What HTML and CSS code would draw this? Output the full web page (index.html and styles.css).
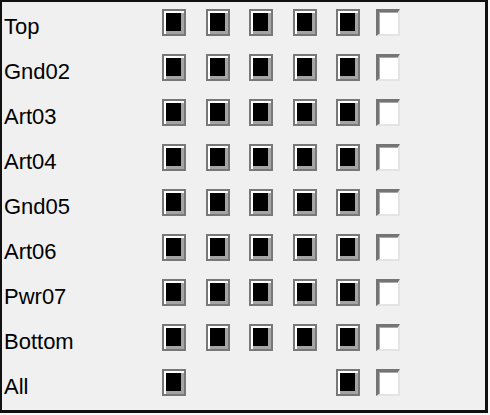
FILE: index.html
```html
<!DOCTYPE html>
<html>
<head>
<meta charset="utf-8">
<link rel="stylesheet" href="styles.css">
</head>
<body>
<div class="frame">
  <div class="grid">
    <div class="label">Top</div>
    <div class="cell"><span class="cb"></span></div><div class="cell"><span class="cb"></span></div><div class="cell"><span class="cb"></span></div><div class="cell"><span class="cb"></span></div><div class="cell"><span class="cb"></span></div><div class="cell"><span class="wb"></span></div>

    <div class="label">Gnd02</div>
    <div class="cell"><span class="cb"></span></div><div class="cell"><span class="cb"></span></div><div class="cell"><span class="cb"></span></div><div class="cell"><span class="cb"></span></div><div class="cell"><span class="cb"></span></div><div class="cell"><span class="wb"></span></div>

    <div class="label">Art03</div>
    <div class="cell"><span class="cb"></span></div><div class="cell"><span class="cb"></span></div><div class="cell"><span class="cb"></span></div><div class="cell"><span class="cb"></span></div><div class="cell"><span class="cb"></span></div><div class="cell"><span class="wb"></span></div>

    <div class="label">Art04</div>
    <div class="cell"><span class="cb"></span></div><div class="cell"><span class="cb"></span></div><div class="cell"><span class="cb"></span></div><div class="cell"><span class="cb"></span></div><div class="cell"><span class="cb"></span></div><div class="cell"><span class="wb"></span></div>

    <div class="label">Gnd05</div>
    <div class="cell"><span class="cb"></span></div><div class="cell"><span class="cb"></span></div><div class="cell"><span class="cb"></span></div><div class="cell"><span class="cb"></span></div><div class="cell"><span class="cb"></span></div><div class="cell"><span class="wb"></span></div>

    <div class="label">Art06</div>
    <div class="cell"><span class="cb"></span></div><div class="cell"><span class="cb"></span></div><div class="cell"><span class="cb"></span></div><div class="cell"><span class="cb"></span></div><div class="cell"><span class="cb"></span></div><div class="cell"><span class="wb"></span></div>

    <div class="label">Pwr07</div>
    <div class="cell"><span class="cb"></span></div><div class="cell"><span class="cb"></span></div><div class="cell"><span class="cb"></span></div><div class="cell"><span class="cb"></span></div><div class="cell"><span class="cb"></span></div><div class="cell"><span class="wb"></span></div>

    <div class="label">Bottom</div>
    <div class="cell"><span class="cb"></span></div><div class="cell"><span class="cb"></span></div><div class="cell"><span class="cb"></span></div><div class="cell"><span class="cb"></span></div><div class="cell"><span class="cb"></span></div><div class="cell"><span class="wb"></span></div>

    <div class="label">All</div>
    <div class="cell"><span class="cb"></span></div><div class="cell"></div><div class="cell"></div><div class="cell"></div><div class="cell"><span class="cb"></span></div><div class="cell"><span class="wb"></span></div>
  </div>
</div>
</body>
</html>
```
FILE: styles.css
```css
html, body {
  margin: 0;
  padding: 0;
  background: #f9f9f9;
}
.frame {
  width: 488px;
  height: 413px;
  box-sizing: border-box;
  border: 2px solid #111;
  border-right-width: 3px;
  border-bottom-width: 3px;
  background: #f0f0f0;
  padding: 7px 0 0 2px;
  font-family: "Liberation Sans", Arial, sans-serif;
  font-size: 22px;
  color: #000;
}
.grid {
  display: grid;
  grid-template-columns: 158px 43.5px 43.5px 43.5px 43.5px 40px 24px;
  grid-auto-rows: 45px;
}
.label {
  line-height: 22px;
  padding-top: 7px;
  white-space: nowrap;
}
.cell {
  display: block;
}
.cb {
  display: block;
  width: 24px;
  height: 27px;
  box-sizing: border-box;
  border: 2px solid #787878;
  background: #000;
  box-shadow: inset 2px 2px 0 #ffffff, inset -3px -3px 0 #a4a4a4;
}
.wb {
  display: block;
  width: 24px;
  height: 27px;
  box-sizing: border-box;
  border-top: 3px solid #747474;
  border-left: 3px solid #747474;
  border-right: 2px solid #e4e4e4;
  border-bottom: 2px solid #e4e4e4;
  background: #fff;
  box-shadow: inset 1px 1px 0 #a8a8a8;
}
```
